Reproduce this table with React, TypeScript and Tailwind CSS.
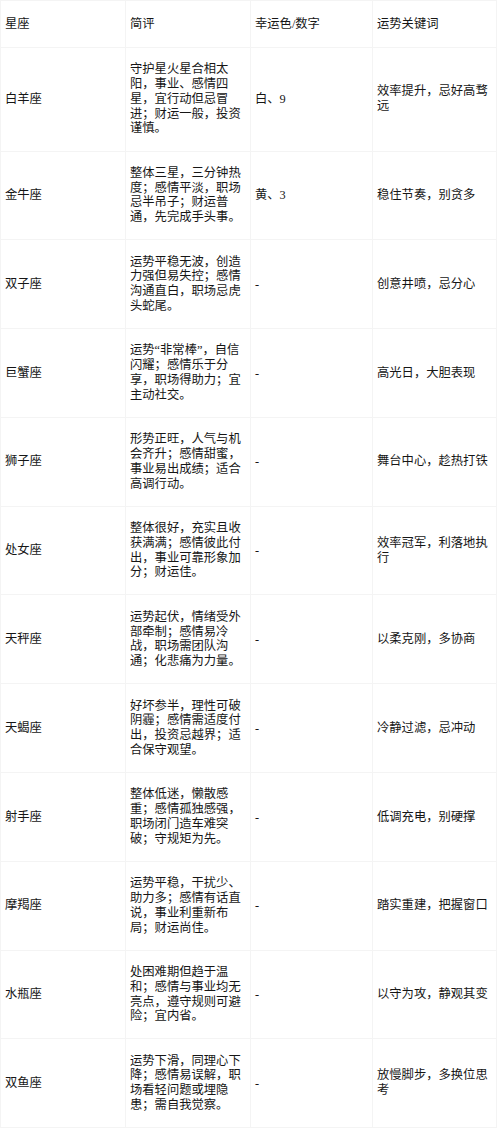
import React from 'react'

const rows = [
    ['白羊座', '守护星火星合相太阳，事业、感情四星，宜行动但忌冒进；财运一般，投资谨慎。', '白、9', '效率提升，忌好高骛远'],
    ['金牛座', '整体三星，三分钟热度；感情平淡，职场忌半吊子；财运普通，先完成手头事。', '黄、3', '稳住节奏，别贪多'],
    ['双子座', '运势平稳无波，创造力强但易失控；感情沟通直白，职场忌虎头蛇尾。', '-', '创意井喷，忌分心'],
    ['巨蟹座', '运势“非常棒”，自信闪耀；感情乐于分享，职场得助力；宜主动社交。', '-', '高光日，大胆表现'],
    ['狮子座', '形势正旺，人气与机会齐升；感情甜蜜，事业易出成绩；适合高调行动。', '-', '舞台中心，趁热打铁'],
    ['处女座', '整体很好，充实且收获满满；感情彼此付出，事业可靠形象加分；财运佳。', '-', '效率冠军，利落地执行'],
    ['天秤座', '运势起伏，情绪受外部牵制；感情易冷战，职场需团队沟通；化悲痛为力量。', '-', '以柔克刚，多协商'],
    ['天蝎座', '好坏参半，理性可破阴霾；感情需适度付出，投资忌越界；适合保守观望。', '-', '冷静过滤，忌冲动'],
    ['射手座', '整体低迷，懒散感重；感情孤独感强，职场闭门造车难突破；守规矩为先。', '-', '低调充电，别硬撑'],
    ['摩羯座', '运势平稳，干扰少、助力多；感情有话直说，事业利重新布局；财运尚佳。', '-', '踏实重建，把握窗口'],
    ['水瓶座', '处困难期但趋于温和；感情与事业均无亮点，遵守规则可避险；宜内省。', '-', '以守为攻，静观其变'],
    ['双鱼座', '运势下滑，同理心下降；感情易误解，职场看轻问题或埋隐患；需自我觉察。', '-', '放慢脚步，多换位思考'],
]

const cell = 'border border-[#f4f4f4] px-[4px] align-middle text-left font-normal'

export default function App() {
    return (
        <div className="bg-white w-[500px] min-h-[1131px] text-[#161616] text-[12.3px] leading-[14.8px] [font-family:'Liberation_Serif','Noto_Sans_CJK_SC',serif]">
            <table className="table-fixed border-collapse w-[496px]">
                <colgroup>
                    <col className="w-[125px]" />
                    <col className="w-[125px]" />
                    <col className="w-[122px]" />
                    <col className="w-[124px]" />
                </colgroup>
                <thead>
                    <tr className="h-[47px]">
                        <th className={cell}>星座</th>
                        <th className={cell}>简评</th>
                        <th className={cell}>幸运色/数字</th>
                        <th className={cell}>运势关键词</th>
                    </tr>
                </thead>
                <tbody>
                    {rows.map((r) => (
                        <tr key={r[0]}>
                            <td className={`${cell} py-[14.3px]`}>{r[0]}</td>
                            <td className={`${cell} py-[14.3px]`}>{r[1]}</td>
                            <td className={`${cell} py-[14.3px]`}>{r[2]}</td>
                            <td className={`${cell} py-[14.3px]`}>{r[3]}</td>
                        </tr>
                    ))}
                </tbody>
            </table>
        </div>
    )
}
